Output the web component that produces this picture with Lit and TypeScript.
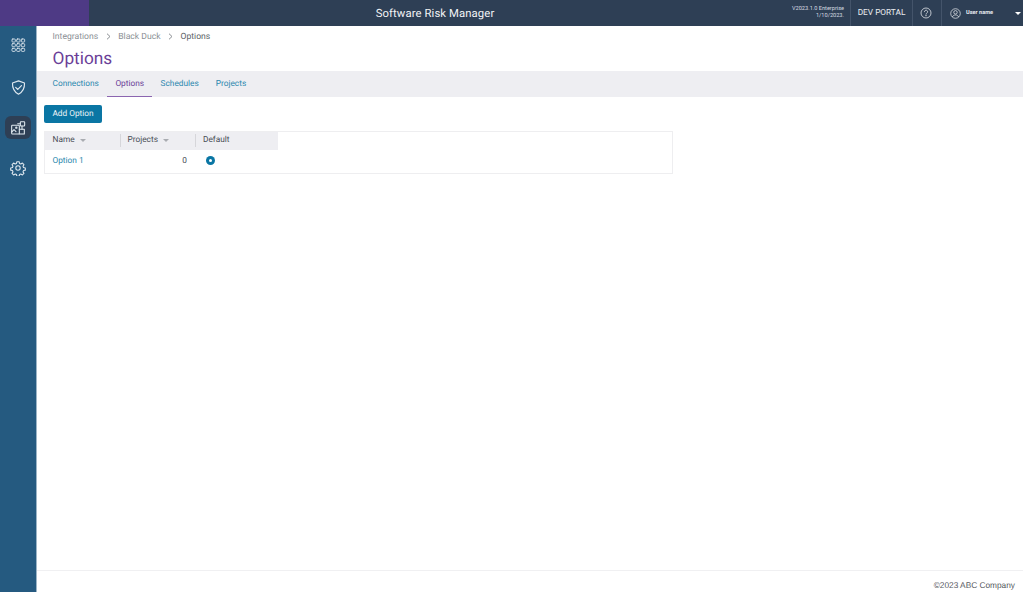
import { LitElement, html, css, svg } from "lit";
import { customElement } from "lit/decorators.js";

const stroke = (inner: unknown, size = 18, vb = 24) => html`<svg width=${size} height=${size} viewBox="0 0 ${vb} ${vb}" fill="none" stroke="currentColor" stroke-width="1.6" stroke-linecap="round" stroke-linejoin="round">${inner}</svg>`;

const gridDots = [3, 10, 17].flatMap((y) => [3, 10, 17].map((x) => svg`<rect x=${x} y=${y} width="5" height="4.6" rx="1.2" />`));

@customElement("app-root")
export class AppRoot extends LitElement {
  static styles = css`
    :host { display: block; height: 599px; background: #fff; font-family: Roboto, "Liberation Sans", sans-serif; color: #4a4f57; overflow: hidden; text-rendering: geometricPrecision; }
    .page { height: 592px; display: flex; flex-direction: column; }
    .top { height: 26px; flex: none; display: flex; align-items: stretch; background: #2e3f55; color: #fff; }
    .brand { width: 89px; background: #4e3a85; }
    .title { flex: 1; padding-left: 12px; line-height: 27px; text-align: center; font-size: 11.3px; letter-spacing: .1px; color: #f2f4f6; }
    .version { width: 81px; box-sizing: border-box; padding: 6px 6px 0 0; font-size: 5.6px; line-height: 7.4px; text-align: right; color: #d6dbe2; }
    .cell { display: flex; align-items: center; border-left: 1px solid #44546a; }
    .portal { width: 61px; justify-content: center; font-size: 8.300px; color: #e8ebef; }
    .help { width: 29px; padding-right: 3px; box-sizing: border-box; justify-content: center; color: #dfe3e8; }
    .user { width: 82px; padding-left: 8px; gap: 5px; box-sizing: border-box; font-size: 5.6px; font-weight: 700; color: #e8ebef; position: relative; }
    .caret { position: absolute; right: 2px; top: 12px; width: 0; height: 0; border: 3px solid transparent; border-top: 3.5px solid #fff; border-bottom: 0; }
    .body { flex: 1; display: flex; min-height: 0; }
    .side { width: 37px; box-sizing: border-box; flex: none; background: #255a80; border-right: 1px solid #9db5c7; color: #dfe8ef; display: flex; flex-direction: column; align-items: center; padding-top: 7.500px; }
    .ico { width: 26px; height: 23px; flex: none; display: flex; align-items: center; justify-content: center; border-radius: 6px; margin-bottom: 17.500px; }
    .ico:first-child { margin-bottom: 19px; }
    .ico.active { background: #2e3f55; }
    .main { flex: 1; min-width: 0; display: flex; flex-direction: column; }
    .crumbs { height: 21px; padding: 0 0 0 15.500px; display: flex; align-items: center; gap: 7.500px; font-size: 8.600px; color: #8b8f95; }
    .crumbs .sep { color: #7f8388; display: flex; }
    .crumbs .cur { color: #5a5e64; }
    h1 { margin: 0; height: 24px; padding-left: 15.500px; font-size: 17.300px; line-height: 24px; font-weight: 400; color: #6b3f98; }
    .tabs { height: 26px; flex: none; background: #eeeef2; display: flex; padding-left: 7px; font-size: 8.300px; color: #2b88ae; }
    .tab { padding: 0 8.500px; line-height: 26px; box-sizing: border-box; height: 26px; }
    .tab.on { color: #6b3f98; border-bottom: 1px solid #8b65b0; padding: 0 8px; }
    .content { flex: 1; padding: 8px 7px 0; }
    .btn { width: 58px; height: 18px; border-radius: 2px; background: #0a76a4; color: #e9f2f6; font-size: 8.300px; line-height: 18px; text-align: center; border: 0; padding: 0; display: block; font-family: inherit; text-rendering: geometricPrecision; }
    .table { width: 629px; margin-top: 8px; border: 1px solid #eeeef0; box-sizing: border-box; height: 43px; }
    .thead { width: 233px; height: 18px; padding-bottom: 2px; box-sizing: border-box; background: #eeeef2; display: flex; font-size: 8.300px; color: #4a4f57; }
    .row { display: flex; height: 22px; padding-bottom: 1px; box-sizing: border-box; align-items: center; font-size: 8.300px; }
    .c1 { width: 74.500px; padding-left: 7.500px; box-sizing: border-box; }
    .c2 { width: 75.500px; padding-left: 8px; box-sizing: border-box; }
    .c3 { width: 83px; padding-left: 8px; box-sizing: border-box; }
    .thead > div { display: flex; align-items: center; gap: 5px; position: relative; }
    .thead > div + div::before { content: ""; position: absolute; left: 0; top: 2px; bottom: 1px; width: 1px; background: #d6d6da; }
    .sort { width: 0; height: 0; border: 3px solid transparent; border-top: 3px solid #a9acb1; border-bottom: 0; margin-top: 1px; }
    .link { color: #2b88ae; }
    .num { text-align: right; padding: 0 8px 0 0; }
    .radio { width: 9px; height: 9px; border-radius: 50%; background: #0a76a4; display: flex; align-items: center; justify-content: center; margin-left: 3px; }
    .radio i { width: 3px; height: 3px; border-radius: 50%; background: #fff; display: block; }
    footer { height: 22px; flex: none; border-top: 1px solid #f0f0f2; box-sizing: border-box; text-align: right; padding: 8px 8px 0 0; font-size: 8.300px; line-height: 12px; color: #55585d; font-family: "Liberation Sans", Arial, sans-serif; }
  `;

  render() {
    const chev = html`<span class="sep"><svg width="5" height="7" viewBox="0 0 5 7" fill="none" stroke="currentColor" stroke-width=".9"><path d="M1 .7 4 3.5 1 6.3"/></svg></span>`;
    return html`<div class="page">
      <header class="top">
        <div class="brand"></div>
        <div class="title">Software Risk Manager</div>
        <div class="version">V2023.1.0 Enterprise<br />1/10/2023.</div>
        <div class="cell portal">DEV PORTAL</div>
        <div class="cell help">
          <svg width="12" height="12" viewBox="0 0 12 12" fill="none" stroke="currentColor" stroke-width=".8"><circle cx="6" cy="6" r="5"/><path d="M4.4 4.7a1.6 1.6 0 1 1 2.4 1.4c-.5.3-.8.6-.8 1.1" stroke-linecap="round"/><circle cx="6" cy="8.8" r=".3" fill="currentColor"/></svg>
        </div>
        <div class="cell user">
          <svg width="11" height="11" viewBox="0 0 12 12" fill="none" stroke="currentColor" stroke-width=".8"><circle cx="6" cy="6" r="5.2"/><circle cx="6" cy="4.7" r="1.9"/><path d="M2.6 9.8c.6-1.5 1.9-2.2 3.4-2.2s2.800.7 3.400 2.200"/></svg>
          User name
          <span class="caret"></span>
        </div>
      </header>
      <div class="body">
        <nav class="side">
          <div class="ico">${stroke(svg`<g stroke-width="1.3">${gridDots}</g>`, 16)}</div>
          <div class="ico">${stroke(svg`<path d="M12 2.600 20.500 5.600c.3 7-2.500 12.600-8.500 15.800C6 18.200 3.200 12.600 3.500 5.600Z"/><path d="m8 11.800 3 3 5.200-5.600"/>`, 17)}</div>
          <div class="ico active">${stroke(svg`<rect x="2.500" y="8" width="11.500" height="13" rx="1"/><path d="M14 14h7.500v7H14"/><path d="M2.500 18l3.500-3.500 3 3"/><circle cx="9.500" cy="11.500" r="1"/><rect x="15.500" y="2.500" width="6.500" height="6.500" rx="1"/><path d="M11.500 5.500h4M18 9v5"/>`, 16)}</div>
          <div class="ico">${stroke(svg`<circle cx="12" cy="12" r="3.300"/><path d="M10.300 2.500h3.400l.6 2.700 1.900.8 2.400-1.400 2.300 2.400-1.400 2.300.8 2 2.700.6v3.300l-2.700.6-.8 2 1.400 2.300-2.300 2.400-2.400-1.400-1.900.8-.6 2.700h-3.400l-.6-2.700-1.900-.8-2.400 1.400-2.300-2.400 1.400-2.300-.8-2-2.700-.6v-3.300l2.700-.6.8-2-1.400-2.300 2.300-2.400 2.400 1.400 1.900-.8Z"/>`, 16)}</div>
        </nav>
        <main class="main">
          <div class="crumbs">
            <span>Integrations</span>${chev}<span>Black Duck</span>${chev}<span class="cur">Options</span>
          </div>
          <h1>Options</h1>
          <div class="tabs">
            <div class="tab">Connections</div>
            <div class="tab on">Options</div>
            <div class="tab">Schedules</div>
            <div class="tab">Projects</div>
          </div>
          <div class="content">
            <button class="btn">Add Option</button>
            <div class="table">
              <div class="thead">
                <div class="c1">Name <span class="sort"></span></div>
                <div class="c2">Projects <span class="sort"></span></div>
                <div class="c3">Default</div>
              </div>
              <div class="row">
                <div class="c1 link">Option 1</div>
                <div class="c2 num">0</div>
                <div class="c3"><span class="radio"><i></i></span></div>
              </div>
            </div>
          </div>
          <footer>©2023 ABC Company</footer>
        </main>
      </div>
    </div>`;
  }
}
